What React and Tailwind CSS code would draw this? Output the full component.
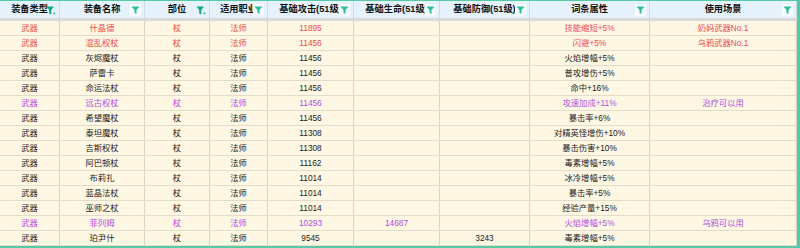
import React from "react";

const cols = [
  "装备类型",
  "装备名称",
  "部位",
  "适用职业",
  "基础攻击(51级)",
  "基础生命(51级)",
  "基础防御(51级)",
  "词条属性",
  "使用场景",
];

// filter is "on" for these columns
const activeCols = [0, 2];

const rows = [
  { c: "red", v: ["武器", "什晶德", "杖", "法师", "11895", "", "", "技能缩短+5%", "奶妈武器No.1"] },
  { c: "red", v: ["武器", "混乱权杖", "杖", "法师", "11456", "", "", "闪避+5%", "乌鸦武器No.1"] },
  { v: ["武器", "灰烬魔杖", "杖", "法师", "11456", "", "", "火焰增幅+5%", ""] },
  { v: ["武器", "萨雷卡", "杖", "法师", "11456", "", "", "普攻增伤+5%", ""] },
  { v: ["武器", "命运法杖", "杖", "法师", "11456", "", "", "命中+16%", ""] },
  { c: "purple", v: ["武器", "远古权杖", "杖", "法师", "11456", "", "", "攻速加成+11%", "治疗可以用"] },
  { v: ["武器", "希望魔杖", "杖", "法师", "11456", "", "", "暴击率+6%", ""] },
  { v: ["武器", "泰坦魔杖", "杖", "法师", "11308", "", "", "对精英怪增伤+10%", ""] },
  { v: ["武器", "吉斯权杖", "杖", "法师", "11308", "", "", "暴击伤害+10%", ""] },
  { v: ["武器", "阿巴顿杖", "杖", "法师", "11162", "", "", "毒素增幅+5%", ""] },
  { v: ["武器", "布莉扎", "杖", "法师", "11014", "", "", "冰冷增幅+5%", ""] },
  { v: ["武器", "蓝晶法杖", "杖", "法师", "11014", "", "", "暴击率+5%", ""] },
  { v: ["武器", "巫师之杖", "杖", "法师", "11014", "", "", "经验产量+15%", ""] },
  { c: "purple", v: ["武器", "菲列姆", "杖", "法师", "10293", "14687", "", "火焰增幅+5%", "乌鸦可以用"] },
  { v: ["武器", "珀尹什", "杖", "法师", "9545", "", "3243", "毒素增幅+5%", ""] },
];

const colorClass = {
  red: "text-[#ef4a4a]",
  purple: "text-[#b24de2]",
};

const FilterIcon = ({ active }) =>
  active ? (
    <svg width="10" height="12" viewBox="0 0 10 12" className="absolute right-[3px] top-[3px]">
      <path d="M0.5 2.5 H8 L5.3 6 V10.5 L3.2 9.5 V6 Z" fill="#13a77e" />
      <rect x="7.6" y="8.6" width="1.6" height="1.6" fill="#13a77e" />
    </svg>
  ) : (
    <svg width="11" height="12" viewBox="0 0 11 12" className="absolute right-[3px] top-[3px]">
      <rect x="0" y="0" width="11" height="12" fill="#f5fbfe" />
      <path d="M1.5 2.5 H9.5 L6.5 6 V10 L4.5 9 V6 Z" fill="#2dbf96" />
    </svg>
  );

export default function App() {
  return (
    <div
      className="w-[800px] h-[248px] overflow-hidden bg-[#fdf7e4] border-t border-b-2 border-r-[3px] border-[#56c9a5] text-[8.3px] leading-none text-[#222]"
      style={{ fontFamily: '"Liberation Sans", "Noto Sans CJK SC", sans-serif' }}
    >
      <div className="grid grid-cols-[60px_85px_65px_58px_86px_86px_90px_120px_147px] h-[17px] bg-[#e5f2fb]">
        {cols.map((name, i) => (
          <div
            key={i}
            className="relative flex items-center justify-center overflow-hidden whitespace-nowrap border-r border-[#cddde8] font-semibold text-[9.2px] text-[#111]"
          >
            {name}
            <FilterIcon active={activeCols.includes(i)} />
          </div>
        ))}
      </div>
      <div className="h-[3px] bg-[#dadada]" />
      {rows.map((r, ri) => (
        <div
          key={ri}
          className={`grid grid-cols-[60px_85px_65px_58px_86px_86px_90px_120px_147px] h-[15px] border-b border-[#e4dccb] ${
            r.c ? colorClass[r.c] : ""
          }`}
        >
          {r.v.map((v, ci) => (
            <div
              key={ci}
              className="flex items-center justify-center whitespace-nowrap border-r border-[#dcd4c3]"
            >
              {v}
            </div>
          ))}
        </div>
      ))}
    </div>
  );
}
